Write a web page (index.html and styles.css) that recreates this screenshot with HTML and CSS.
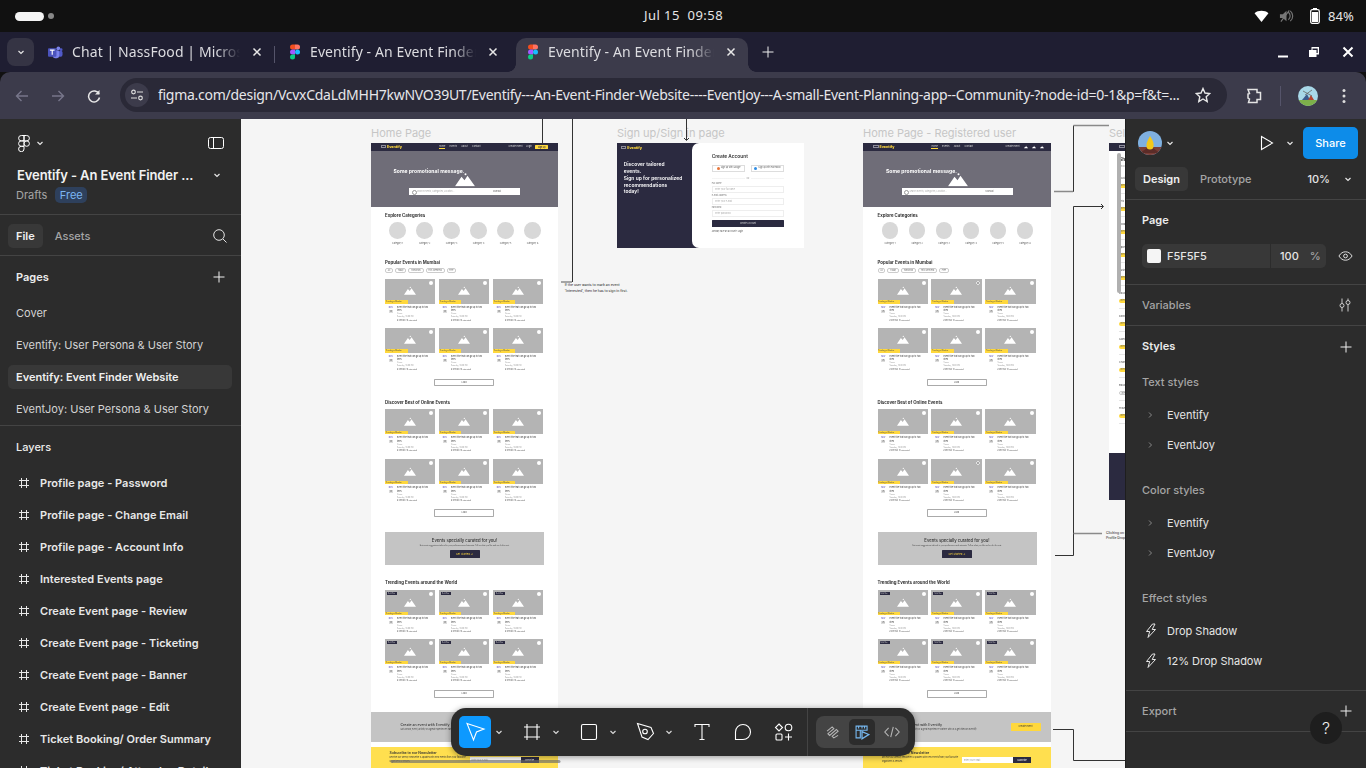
FILE: index.html
```html
<!DOCTYPE html>
<html lang="en">
<head>
<meta charset="utf-8">
<title>Eventify - Figma</title>
<link rel="stylesheet" href="styles.css">
</head>
<body>
<svg class="defs" aria-hidden="true">
  <symbol id="m" viewBox="0 0 20 13"><path d="M0 13 6.5 3.5 9.5 7 12.5 2.5 20 13z" fill="#fff"/><circle cx="10.5" cy="1" r="1" fill="#fff"/></symbol>
  <symbol id="figc" viewBox="0 0 12 18"><path d="M3 0h3v6H3a3 3 0 0 1 0-6z" fill="#f24e1e"/><path d="M6 0h3a3 3 0 0 1 0 6H6z" fill="#ff7262"/><path d="M3 6h3v6H3a3 3 0 0 1 0-6z" fill="#a259ff"/><circle cx="9" cy="9" r="3" fill="#1abcfe"/><path d="M3 12h3v3a3 3 0 1 1-3-3z" fill="#0acf83"/></symbol>
  <symbol id="chev" viewBox="0 0 10 10"><path d="M2.5 4 5 6.5 7.5 4" fill="none" stroke="currentColor" stroke-width="1.2"/></symbol>
  <symbol id="hash" viewBox="0 0 12 12"><path d="M3.5 1v10M8.5 1v10M1 3.5h10M1 8.5h10" fill="none" stroke="currentColor" stroke-width="1"/></symbol>
  <symbol id="plus" viewBox="0 0 12 12"><path d="M6 .5v11M.5 6h11" fill="none" stroke="currentColor" stroke-width="1"/></symbol>
  <symbol id="bolt" viewBox="0 0 12 16"><path d="M7.5 1 1.5 8.5h3.2L3 14.5 10.5 6.5H7.2L10 1z" fill="none" stroke="currentColor" stroke-width="1"/></symbol>
  <symbol id="caret" viewBox="0 0 6 8"><path d="M2 1.5 4.5 4 2 6.5" fill="none" stroke="currentColor" stroke-width="1"/></symbol>
  <symbol id="x" viewBox="0 0 10 10"><path d="M1.5 1.5l7 7M8.5 1.5l-7 7" fill="none" stroke="currentColor" stroke-width="1.5"/></symbol>
</svg>

<header class="status">
  <div class="status-left"><span class="pill"></span><span class="dot"></span></div>
  <div class="clock">Jul 15 &nbsp;09:58</div>
  <div class="status-right">
    <svg class="st-wifi" viewBox="0 0 16 14"><path d="M0.5 3.5C4.5 0 11.5 0 15.500 3.500L8 13z" fill="#fff"/></svg>
    <svg class="st-vol" viewBox="0 0 16 14"><path d="M1 5h3l4-3.500v11L4 9H1z" fill="#777"/><path d="M10 3c2.500 2 2.500 6 0 8M12 1.500c3.500 3 3.500 8 0 11M2 13 11 1" fill="none" stroke="#777" stroke-width="1.200"/></svg>
    <svg class="st-bat" viewBox="0 0 10 16"><rect x="3" y="0" width="4" height="2" fill="#fff"/><rect x=".7" y="1.700" width="8.600" height="13.600" rx="1.500" fill="none" stroke="#fff" stroke-width="1.300"/><rect x="2" y="4" width="6" height="10" fill="#fff"/></svg>
    <span class="pct">84%</span>
  </div>
</header>

<nav class="tabstrip">
  <button class="tablist"><svg class="i10"><use href="#chev"/></svg></button>
  <div class="tab first">
    <svg class="ficon teams" viewBox="0 0 16 16"><circle cx="11" cy="3.500" r="2" fill="#7b83eb"/><circle cx="14" cy="5" r="1.500" fill="#5059c9"/><rect x="8" y="6" width="7.500" height="6.500" rx="2" fill="#5059c9"/><rect x="5" y="5.500" width="7" height="8.500" rx="2.500" fill="#7b83eb"/><rect x="0" y="3.500" width="9" height="9" rx="1" fill="#4b53bc"/><path d="M2 5.500h5M4.500 5.500v5" stroke="#fff" stroke-width="1.200"/></svg>
    <span class="tab-title">Chat | NassFood | Microsoft Teams</span>
    <svg class="tab-x"><use href="#x"/></svg>
  </div>
  <span class="tab-sep"></span>
  <div class="tab second">
    <svg class="ficon"><use href="#figc"/></svg>
    <span class="tab-title">Eventify - An Event Finder Website</span>
    <svg class="tab-x"><use href="#x"/></svg>
  </div>
  <div class="tab active">
    <svg class="ficon"><use href="#figc"/></svg>
    <span class="tab-title">Eventify - An Event Finder Website</span>
    <svg class="tab-x"><use href="#x"/></svg>
  </div>
  <svg class="newtab"><use href="#plus"/></svg>
  <div class="winctl">
    <svg class="w-min" viewBox="0 0 12 12"><path d="M1 10.500h10" stroke="#fff" stroke-width="2"/></svg>
    <svg class="w-max" viewBox="0 0 12 12"><path d="M3.500 1h7.500v7.500H8.500V11H1V4h2.500zM4.500 2.500v1.500h4v3h1.200V2.500z" fill="#fff" fill-rule="evenodd"/></svg>
    <svg class="w-close" viewBox="0 0 12 12"><path d="M1.500 1.500l9 9M10.500 1.500l-9 9" stroke="#fff" stroke-width="2"/></svg>
  </div>
</nav>

<div class="toolbar">
  <svg class="nav-ic dim" viewBox="0 0 14 14"><path d="M13 7H1.500M6.500 2 1.500 7l5 5" fill="none" stroke="currentColor" stroke-width="1.400"/></svg>
  <svg class="nav-ic dim fwd" viewBox="0 0 14 14"><path d="M1 7h11.500M7.500 2l5 5-5 5" fill="none" stroke="currentColor" stroke-width="1.400"/></svg>
  <svg class="nav-ic reload" viewBox="0 0 14 14"><path d="M12 5A5.500 5.500 0 1 0 12.500 8.500" fill="none" stroke="currentColor" stroke-width="1.500"/><path d="M12.500 1v4.500H8z" fill="currentColor"/></svg>
  <div class="omni">
    <span class="site"><svg viewBox="0 0 14 14"><circle cx="3.500" cy="4" r="1.800" fill="none" stroke="#ddd" stroke-width="1.200"/><path d="M7 4h6M1 10h6" stroke="#ddd" stroke-width="1.200"/><circle cx="10.500" cy="10" r="1.800" fill="none" stroke="#ddd" stroke-width="1.200"/></svg></span>
    <span class="url">figma.com/design/VcvxCdaLdMHH7kwNVO39UT/Eventify---An-Event-Finder-Website----EventJoy---A-small-Event-Planning-app--Community-?node-id=0-1&amp;p=f&amp;t=...</span>
    <svg class="star" viewBox="0 0 16 16"><path d="M8 1.500 10 6l4.800.5-3.600 3.200 1 4.800L8 12l-4.200 2.500 1-4.800L1.200 6.500 6 6z" fill="none" stroke="#e8e8e8" stroke-width="1.400"/></svg>
  </div>
  <svg class="ext" viewBox="0 0 18 18"><path d="M3 2.500h9v3h3.500v7H12v3H3.500l1-3.500-1.500-1V7l1.500-.5z" fill="none" stroke="#e4e4e4" stroke-width="1.500"/></svg>
  <span class="tb-sep"></span>
  <svg class="chrome-av" viewBox="0 0 20 20"><defs><clipPath id="cav"><circle cx="10" cy="10" r="10"/></clipPath></defs><g clip-path="url(#cav)"><rect width="20" height="20" fill="#a8d8e8"/><rect y="14" width="20" height="6" fill="#7db04a"/><path d="M4 14 9 8l3 6z" fill="#3c5a8c"/><path d="M10 14l3-5 3 5z" fill="#b5452f"/><path d="M5 5l9 5M14 4 7 9" stroke="#666" stroke-width=".8"/></g></svg>
  <svg class="kebab" viewBox="0 0 4 16"><circle cx="2" cy="2.500" r="1.500" fill="#ddd"/><circle cx="2" cy="8" r="1.500" fill="#ddd"/><circle cx="2" cy="13.500" r="1.500" fill="#ddd"/></svg>
</div>

<main class="app">
  <aside class="left">
    <section class="l-head">
      <div class="l-top">
        <svg class="figlogo" viewBox="0 0 12 17"><path d="M6 .5H3.300a2.700 2.700 0 0 0 0 5.400H6zM6 .5h2.700a2.700 2.700 0 0 1 0 5.400H6zM6 5.900H3.300a2.700 2.700 0 0 0 0 5.400H6zM11.400 8.600a2.700 2.700 0 1 1-5.400 0 2.700 2.700 0 0 1 5.400 0zM6 11.300H3.300A2.700 2.700 0 1 0 6 14z" fill="none" stroke="#fff" stroke-width="1"/></svg>
        <svg class="i10 lc"><use href="#chev"/></svg>
        <svg class="panel-ic" viewBox="0 0 16 12"><rect x=".5" y=".5" width="15" height="11" rx="2" fill="none" stroke="#fff"/><path d="M5.500 .5v11" stroke="#fff"/></svg>
      </div>
      <div class="l-title"><span>Eventify - An Event Finder ...</span><svg class="i10"><use href="#chev"/></svg></div>
      <div class="l-sub"><span>Drafts</span><span class="free">Free</span></div>
    </section>
    <section class="l-tabs">
      <span class="ltab on">File</span><span class="ltab">Assets</span>
      <svg class="search" viewBox="0 0 14 14"><circle cx="6" cy="6" r="5.300" fill="none" stroke="#e6e6e6"/><path d="M10 10l3.500 3.500" stroke="#e6e6e6"/></svg>
    </section>
    <section class="l-pages">
      <div class="sec-h"><span>Pages</span><svg class="i12"><use href="#plus"/></svg></div>
      <div class="page">Cover</div>
      <div class="page">Eventify: User Persona &amp; User Story</div>
      <div class="page sel">Eventify: Event Finder Website</div>
      <div class="page">EventJoy: User Persona &amp; User Story</div>
    </section>
    <section class="l-layers">
      <div class="layers-h">Layers</div>
      <div class="layer"><svg class="hash"><use href="#hash"/></svg>Profile page - Password</div>
      <div class="layer"><svg class="hash"><use href="#hash"/></svg>Profile page - Change Email</div>
      <div class="layer"><svg class="hash"><use href="#hash"/></svg>Profile page - Account Info</div>
      <div class="layer"><svg class="hash"><use href="#hash"/></svg>Interested Events page</div>
      <div class="layer"><svg class="hash"><use href="#hash"/></svg>Create Event page - Review</div>
      <div class="layer"><svg class="hash"><use href="#hash"/></svg>Create Event page - Ticketing</div>
      <div class="layer"><svg class="hash"><use href="#hash"/></svg>Create Event page - Banner</div>
      <div class="layer"><svg class="hash"><use href="#hash"/></svg>Create Event page - Edit</div>
      <div class="layer"><svg class="hash"><use href="#hash"/></svg>Ticket Booking/ Order Summary</div>
      <div class="layer"><svg class="hash"><use href="#hash"/></svg>Ticket Booking/ Attendee Details</div>
    </section>
  </aside>

  <div class="canvas">
    <div class="flabel l1">Home Page</div>
    <div class="flabel l2">Sign up/Sign in page</div>
    <div class="flabel l3">Home Page - Registered user</div>
    <div class="flabel l4">Select Interests page</div>

    <!-- Frame: Home page -->
    <article class="frame f1">
      <div class="fnav"><span class="flogo"><i></i>Eventify</span><span class="flinks"><u class="cur">Home</u><u>Events</u><u>About</u><u>Contact</u></span><span class="fright"><u>Create Event</u><u>Login</u><b class="signup">Sign Up</b></span></div>
      <div class="hero"><p class="promo">Some promotional message.</p><svg class="hero-m"><use href="#m"/></svg><div class="hsearch"><span class="sq">Search Events, Categories, Location...</span><span class="sl">Mumbai</span></div></div>
      <div class="fbody">
        <h3 class="h-explore">Explore Categories</h3>
        <div class="cats"><div class="cat"><i></i>Category 1</div><div class="cat"><i></i>Category 2</div><div class="cat"><i></i>Category 3</div><div class="cat"><i></i>Category 4</div><div class="cat"><i></i>Category 5</div><div class="cat"><i></i>Category 6</div></div>
        <h3 class="h-popular">Popular Events in Mumbai</h3>
        <div class="chips"><span>All</span><span>Today</span><span>Tomorrow</span><span>This Weekend</span><span>Free</span></div>
        <div class="grid g1">
          <div class="card"><div class="thumb"><svg class="tm"><use href="#m"/></svg><i class="fav"></i><em class="tag">Trending in Mumbai</em></div><div class="meta"><div class="date"><b>NOV</b><s>25</s></div><div class="info"><p>Event title that can go up to two lines</p><small>Venue</small><small>Saturday, 10:00 PM</small><small class="k">₹ 499 INR &nbsp;10 interested</small></div></div></div>
          <div class="card"><div class="thumb"><svg class="tm"><use href="#m"/></svg><i class="fav"></i><em class="tag">Trending in Mumbai</em></div><div class="meta"><div class="date"><b>NOV</b><s>25</s></div><div class="info"><p>Event title that can go up to two lines</p><small>Venue</small><small>Saturday, 10:00 PM</small><small class="k">₹ 499 INR &nbsp;10 interested</small></div></div></div>
          <div class="card"><div class="thumb"><svg class="tm"><use href="#m"/></svg><i class="fav"></i><em class="tag">Trending in Mumbai</em></div><div class="meta"><div class="date"><b>NOV</b><s>25</s></div><div class="info"><p>Event title that can go up to two lines</p><small>Venue</small><small>Saturday, 10:00 PM</small><small class="k">₹ 499 INR &nbsp;10 interested</small></div></div></div>
          <div class="card"><div class="thumb"><svg class="tm"><use href="#m"/></svg><i class="fav"></i><em class="tag">Trending in Mumbai</em></div><div class="meta"><div class="date"><b>NOV</b><s>25</s></div><div class="info"><p>Event title that can go up to two lines</p><small>Venue</small><small>Saturday, 10:00 PM</small><small class="k">₹ 499 INR &nbsp;10 interested</small></div></div></div>
          <div class="card"><div class="thumb"><svg class="tm"><use href="#m"/></svg><i class="fav"></i><em class="tag">Trending in Mumbai</em></div><div class="meta"><div class="date"><b>NOV</b><s>25</s></div><div class="info"><p>Event title that can go up to two lines</p><small>Venue</small><small>Saturday, 10:00 PM</small><small class="k">₹ 499 INR &nbsp;10 interested</small></div></div></div>
          <div class="card"><div class="thumb"><svg class="tm"><use href="#m"/></svg><i class="fav"></i><em class="tag">Trending in Mumbai</em></div><div class="meta"><div class="date"><b>NOV</b><s>25</s></div><div class="info"><p>Event title that can go up to two lines</p><small>Venue</small><small>Saturday, 10:00 PM</small><small class="k">₹ 499 INR &nbsp;10 interested</small></div></div></div>
        </div>
        <div class="load l-a">Load</div>
        <h3 class="h-online">Discover Best of Online Events</h3>
        <div class="grid g2">
          <div class="card"><div class="thumb"><svg class="tm"><use href="#m"/></svg><i class="fav"></i><em class="tag">Trending in Mumbai</em></div><div class="meta"><div class="date"><b>NOV</b><s>25</s></div><div class="info"><p>Event title that can go up to two lines</p><small>Venue</small><small>Saturday, 10:00 PM</small><small class="k">₹ 499 INR &nbsp;10 interested</small></div></div></div>
          <div class="card"><div class="thumb"><svg class="tm"><use href="#m"/></svg><i class="fav"></i><em class="tag">Trending in Mumbai</em></div><div class="meta"><div class="date"><b>NOV</b><s>25</s></div><div class="info"><p>Event title that can go up to two lines</p><small>Venue</small><small>Saturday, 10:00 PM</small><small class="k">₹ 499 INR &nbsp;10 interested</small></div></div></div>
          <div class="card"><div class="thumb"><svg class="tm"><use href="#m"/></svg><i class="fav"></i><em class="tag">Trending in Mumbai</em></div><div class="meta"><div class="date"><b>NOV</b><s>25</s></div><div class="info"><p>Event title that can go up to two lines</p><small>Venue</small><small>Saturday, 10:00 PM</small><small class="k">₹ 499 INR &nbsp;10 interested</small></div></div></div>
          <div class="card"><div class="thumb"><svg class="tm"><use href="#m"/></svg><i class="fav"></i><em class="tag">Trending in Mumbai</em></div><div class="meta"><div class="date"><b>NOV</b><s>25</s></div><div class="info"><p>Event title that can go up to two lines</p><small>Venue</small><small>Saturday, 10:00 PM</small><small class="k">₹ 499 INR &nbsp;10 interested</small></div></div></div>
          <div class="card"><div class="thumb"><svg class="tm"><use href="#m"/></svg><i class="fav"></i><em class="tag">Trending in Mumbai</em></div><div class="meta"><div class="date"><b>NOV</b><s>25</s></div><div class="info"><p>Event title that can go up to two lines</p><small>Venue</small><small>Saturday, 10:00 PM</small><small class="k">₹ 499 INR &nbsp;10 interested</small></div></div></div>
          <div class="card"><div class="thumb"><svg class="tm"><use href="#m"/></svg><i class="fav"></i><em class="tag">Trending in Mumbai</em></div><div class="meta"><div class="date"><b>NOV</b><s>25</s></div><div class="info"><p>Event title that can go up to two lines</p><small>Venue</small><small>Saturday, 10:00 PM</small><small class="k">₹ 499 INR &nbsp;10 interested</small></div></div></div>
        </div>
        <div class="load l-b">Load</div>
        <div class="curated"><h4>Events specially curated for you!</h4><p>Get event suggestions tailored to your preferences and interests. Tell us what you like and we do the rest.</p><span class="getst">Get Started &#8594;</span></div>
        <h3 class="h-trend">Trending Events around the World</h3>
        <div class="grid g3">
          <div class="card"><div class="thumb"><span class="sold">Sold Out</span><svg class="tm"><use href="#m"/></svg><i class="fav"></i><em class="tag">Trending in Mumbai</em></div><div class="meta"><div class="date"><b>NOV</b><s>25</s></div><div class="info"><p>Event title that can go up to two lines</p><small>Venue</small><small>Saturday, 10:00 PM</small><small class="k">₹ 499 INR &nbsp;10 interested</small></div></div></div>
          <div class="card"><div class="thumb"><span class="sold">Sold Out</span><svg class="tm"><use href="#m"/></svg><i class="fav"></i><em class="tag">Trending in Mumbai</em></div><div class="meta"><div class="date"><b>NOV</b><s>25</s></div><div class="info"><p>Event title that can go up to two lines</p><small>Venue</small><small>Saturday, 10:00 PM</small><small class="k">₹ 499 INR &nbsp;10 interested</small></div></div></div>
          <div class="card"><div class="thumb"><span class="sold">Sold Out</span><svg class="tm"><use href="#m"/></svg><i class="fav"></i><em class="tag">Trending in Mumbai</em></div><div class="meta"><div class="date"><b>NOV</b><s>25</s></div><div class="info"><p>Event title that can go up to two lines</p><small>Venue</small><small>Saturday, 10:00 PM</small><small class="k">₹ 499 INR &nbsp;10 interested</small></div></div></div>
          <div class="card"><div class="thumb"><span class="sold">Sold Out</span><svg class="tm"><use href="#m"/></svg><i class="fav"></i><em class="tag">Trending in Mumbai</em></div><div class="meta"><div class="date"><b>NOV</b><s>25</s></div><div class="info"><p>Event title that can go up to two lines</p><small>Venue</small><small>Saturday, 10:00 PM</small><small class="k">₹ 499 INR &nbsp;10 interested</small></div></div></div>
          <div class="card"><div class="thumb"><span class="sold">Sold Out</span><svg class="tm"><use href="#m"/></svg><i class="fav"></i><em class="tag">Trending in Mumbai</em></div><div class="meta"><div class="date"><b>NOV</b><s>25</s></div><div class="info"><p>Event title that can go up to two lines</p><small>Venue</small><small>Saturday, 10:00 PM</small><small class="k">₹ 499 INR &nbsp;10 interested</small></div></div></div>
          <div class="card"><div class="thumb"><span class="sold">Sold Out</span><svg class="tm"><use href="#m"/></svg><i class="fav"></i><em class="tag">Trending in Mumbai</em></div><div class="meta"><div class="date"><b>NOV</b><s>25</s></div><div class="info"><p>Event title that can go up to two lines</p><small>Venue</small><small>Saturday, 10:00 PM</small><small class="k">₹ 499 INR &nbsp;10 interested</small></div></div></div>
        </div>
        <div class="load l-c">Load</div>
      </div>
      <div class="cta"><div><h4>Create an event with Eventify</h4><p>Got a show, event, activity or a great experience? Partner with us &amp; get listed on Eventify</p></div><span class="ctab">Create Event</span></div>
      <div class="news"><div class="ntext"><h4>Subscribe to our Newsletter</h4><p>Receive our weekly newsletter &amp; updates with new events from your favourite organizers &amp; venues.</p></div><span class="ninput">Enter your e-mail</span><span class="nbtn">Subscribe</span></div>
    </article>

    <!-- Frame: Sign up -->
    <article class="frame f2">
      <div class="su-left"><span class="flogo"><i></i>Eventify</span><p>Discover tailored<br>events.<br>Sign up for personalized<br>recommendations<br>today!</p></div>
      <div class="su-right">
        <h4>Create Account</h4>
        <div class="su-btns"><span class="gbtn"><i class="gg"></i>Sign up with Google</span><span class="gbtn"><i class="fb"></i>Sign up with Facebook</span></div>
        <div class="su-or"><span>OR</span></div>
        <label>Full Name</label><div class="su-in">Enter your full name</div>
        <label>E-mail Address</label><div class="su-in">Enter your e-mail</div>
        <label>Password</label><div class="su-in">Enter password</div>
        <div class="su-go">Create Account</div>
        <div class="su-log">Already have an account? Login</div>
      </div>
    </article>

    <!-- Frame: Home registered -->
    <article class="frame f3">
      <div class="fnav"><span class="flogo"><i></i>Eventify</span><span class="flinks"><u class="cur">Home</u><u>Events</u><u>About</u><u>Contact</u></span><span class="fright reg"><u>Create Event</u><svg class="nv"><use href="#m"/></svg><svg class="nv"><use href="#m"/></svg><svg class="nv"><use href="#m"/></svg></span></div>
      <div class="hero"><p class="promo">Some promotional message.</p><svg class="hero-m"><use href="#m"/></svg><div class="hsearch"><span class="sq">Search Events, Categories, Location...</span><span class="sl">Mumbai</span></div></div>
      <div class="fbody">
        <h3 class="h-explore">Explore Categories</h3>
        <div class="cats"><div class="cat"><i></i>Category 1</div><div class="cat"><i></i>Category 2</div><div class="cat"><i></i>Category 3</div><div class="cat"><i></i>Category 4</div><div class="cat"><i></i>Category 5</div><div class="cat"><i></i>Category 6</div></div>
        <h3 class="h-popular">Popular Events in Mumbai</h3>
        <div class="chips"><span>All</span><span>Today</span><span>Tomorrow</span><span>This Weekend</span><span>Free</span></div>
        <div class="grid g1">
          <div class="card"><div class="thumb"><svg class="tm"><use href="#m"/></svg><i class="fav"></i><em class="tag">Trending in Mumbai</em></div><div class="meta"><div class="date"><b>NOV</b><s>25</s></div><div class="info"><p>Event title that can go up to two lines</p><small>Venue</small><small>Saturday, 10:00 PM</small><small class="k">₹ 499 INR &nbsp;10 interested</small></div></div></div>
          <div class="card"><div class="thumb"><svg class="tm"><use href="#m"/></svg><i class="fav dark"></i><em class="tag">Trending in Mumbai</em></div><div class="meta"><div class="date"><b>NOV</b><s>25</s></div><div class="info"><p>Event title that can go up to two lines</p><small>Venue</small><small>Saturday, 10:00 PM</small><small class="k">₹ 499 INR &nbsp;10 interested</small></div></div></div>
          <div class="card"><div class="thumb"><svg class="tm"><use href="#m"/></svg><i class="fav"></i><em class="tag">Trending in Mumbai</em></div><div class="meta"><div class="date"><b>NOV</b><s>25</s></div><div class="info"><p>Event title that can go up to two lines</p><small>Venue</small><small>Saturday, 10:00 PM</small><small class="k">₹ 499 INR &nbsp;10 interested</small></div></div></div>
          <div class="card"><div class="thumb"><svg class="tm"><use href="#m"/></svg><i class="fav"></i><em class="tag">Trending in Mumbai</em></div><div class="meta"><div class="date"><b>NOV</b><s>25</s></div><div class="info"><p>Event title that can go up to two lines</p><small>Venue</small><small>Saturday, 10:00 PM</small><small class="k">₹ 499 INR &nbsp;10 interested</small></div></div></div>
          <div class="card"><div class="thumb"><svg class="tm"><use href="#m"/></svg><i class="fav"></i><em class="tag">Trending in Mumbai</em></div><div class="meta"><div class="date"><b>NOV</b><s>25</s></div><div class="info"><p>Event title that can go up to two lines</p><small>Venue</small><small>Saturday, 10:00 PM</small><small class="k">₹ 499 INR &nbsp;10 interested</small></div></div></div>
          <div class="card"><div class="thumb"><svg class="tm"><use href="#m"/></svg><i class="fav"></i><em class="tag">Trending in Mumbai</em></div><div class="meta"><div class="date"><b>NOV</b><s>25</s></div><div class="info"><p>Event title that can go up to two lines</p><small>Venue</small><small>Saturday, 10:00 PM</small><small class="k">₹ 499 INR &nbsp;10 interested</small></div></div></div>
        </div>
        <div class="load l-a">Load</div>
        <h3 class="h-online">Discover Best of Online Events</h3>
        <div class="grid g2">
          <div class="card"><div class="thumb"><svg class="tm"><use href="#m"/></svg><i class="fav"></i><em class="tag">Trending in Mumbai</em></div><div class="meta"><div class="date"><b>NOV</b><s>25</s></div><div class="info"><p>Event title that can go up to two lines</p><small>Venue</small><small>Saturday, 10:00 PM</small><small class="k">₹ 499 INR &nbsp;10 interested</small></div></div></div>
          <div class="card"><div class="thumb"><svg class="tm"><use href="#m"/></svg><i class="fav"></i><em class="tag">Trending in Mumbai</em></div><div class="meta"><div class="date"><b>NOV</b><s>25</s></div><div class="info"><p>Event title that can go up to two lines</p><small>Venue</small><small>Saturday, 10:00 PM</small><small class="k">₹ 499 INR &nbsp;10 interested</small></div></div></div>
          <div class="card"><div class="thumb"><svg class="tm"><use href="#m"/></svg><i class="fav"></i><em class="tag">Trending in Mumbai</em></div><div class="meta"><div class="date"><b>NOV</b><s>25</s></div><div class="info"><p>Event title that can go up to two lines</p><small>Venue</small><small>Saturday, 10:00 PM</small><small class="k">₹ 499 INR &nbsp;10 interested</small></div></div></div>
          <div class="card"><div class="thumb"><svg class="tm"><use href="#m"/></svg><i class="fav"></i><em class="tag">Trending in Mumbai</em></div><div class="meta"><div class="date"><b>NOV</b><s>25</s></div><div class="info"><p>Event title that can go up to two lines</p><small>Venue</small><small>Saturday, 10:00 PM</small><small class="k">₹ 499 INR &nbsp;10 interested</small></div></div></div>
          <div class="card"><div class="thumb"><svg class="tm"><use href="#m"/></svg><i class="fav dark"></i><em class="tag">Trending in Mumbai</em></div><div class="meta"><div class="date"><b>NOV</b><s>25</s></div><div class="info"><p>Event title that can go up to two lines</p><small>Venue</small><small>Saturday, 10:00 PM</small><small class="k">₹ 499 INR &nbsp;10 interested</small></div></div></div>
          <div class="card"><div class="thumb"><svg class="tm"><use href="#m"/></svg><i class="fav"></i><em class="tag">Trending in Mumbai</em></div><div class="meta"><div class="date"><b>NOV</b><s>25</s></div><div class="info"><p>Event title that can go up to two lines</p><small>Venue</small><small>Saturday, 10:00 PM</small><small class="k">₹ 499 INR &nbsp;10 interested</small></div></div></div>
        </div>
        <div class="load l-b">Load</div>
        <div class="curated"><h4>Events specially curated for you!</h4><p>Get event suggestions tailored to your preferences and interests. Tell us what you like and we do the rest.</p><span class="getst">Get Started &#8594;</span></div>
        <h3 class="h-trend">Trending Events around the World</h3>
        <div class="grid g3">
          <div class="card"><div class="thumb"><span class="sold">Sold Out</span><svg class="tm"><use href="#m"/></svg><i class="fav"></i><em class="tag">Trending in Mumbai</em></div><div class="meta"><div class="date"><b>NOV</b><s>25</s></div><div class="info"><p>Event title that can go up to two lines</p><small>Venue</small><small>Saturday, 10:00 PM</small><small class="k">₹ 499 INR &nbsp;10 interested</small></div></div></div>
          <div class="card"><div class="thumb"><span class="sold">Sold Out</span><svg class="tm"><use href="#m"/></svg><i class="fav"></i><em class="tag">Trending in Mumbai</em></div><div class="meta"><div class="date"><b>NOV</b><s>25</s></div><div class="info"><p>Event title that can go up to two lines</p><small>Venue</small><small>Saturday, 10:00 PM</small><small class="k">₹ 499 INR &nbsp;10 interested</small></div></div></div>
          <div class="card"><div class="thumb"><span class="sold">Sold Out</span><svg class="tm"><use href="#m"/></svg><i class="fav"></i><em class="tag">Trending in Mumbai</em></div><div class="meta"><div class="date"><b>NOV</b><s>25</s></div><div class="info"><p>Event title that can go up to two lines</p><small>Venue</small><small>Saturday, 10:00 PM</small><small class="k">₹ 499 INR &nbsp;10 interested</small></div></div></div>
          <div class="card"><div class="thumb"><span class="sold">Sold Out</span><svg class="tm"><use href="#m"/></svg><i class="fav"></i><em class="tag">Trending in Mumbai</em></div><div class="meta"><div class="date"><b>NOV</b><s>25</s></div><div class="info"><p>Event title that can go up to two lines</p><small>Venue</small><small>Saturday, 10:00 PM</small><small class="k">₹ 499 INR &nbsp;10 interested</small></div></div></div>
          <div class="card"><div class="thumb"><span class="sold">Sold Out</span><svg class="tm"><use href="#m"/></svg><i class="fav"></i><em class="tag">Trending in Mumbai</em></div><div class="meta"><div class="date"><b>NOV</b><s>25</s></div><div class="info"><p>Event title that can go up to two lines</p><small>Venue</small><small>Saturday, 10:00 PM</small><small class="k">₹ 499 INR &nbsp;10 interested</small></div></div></div>
          <div class="card"><div class="thumb"><span class="sold">Sold Out</span><svg class="tm"><use href="#m"/></svg><i class="fav"></i><em class="tag">Trending in Mumbai</em></div><div class="meta"><div class="date"><b>NOV</b><s>25</s></div><div class="info"><p>Event title that can go up to two lines</p><small>Venue</small><small>Saturday, 10:00 PM</small><small class="k">₹ 499 INR &nbsp;10 interested</small></div></div></div>
        </div>
        <div class="load l-c">Load</div>
      </div>
      <div class="cta"><div><h4>Create an event with Eventify</h4><p>Got a show, event, activity or a great experience? Partner with us &amp; get listed on Eventify</p></div><span class="ctab">Create Event</span></div>
      <div class="news"><div class="ntext"><h4>Subscribe to our Newsletter</h4><p>Receive our weekly newsletter &amp; updates with new events from your favourite organizers &amp; venues.</p></div><span class="ninput">Enter your e-mail</span><span class="nbtn">Subscribe</span></div>
    </article>

    <!-- Frame: select interests -->
    <article class="frame f4">
      <div class="fnav"><span class="flogo"><i></i>Eventify</span></div>
      <div class="int-body">
        <h4>Share your interests with us</h4>
        <p class="int-sub">Choose your interests below to get personalized event suggestions.</p>
        <div class="int"><span>Music</span><em>Interest tag</em></div>
        <div class="int"><span>Arts</span><em>Interest tag</em></div>
        <div class="int"><span>Food</span><em>Interest tag</em></div>
        <div class="int"><span>Sports</span><em>Interest tag</em></div>
        <div class="int"><span>Business</span><em>Interest tag</em></div>
        <div class="int"><span>Education</span><em>Interest tag</em></div>
        <div class="int"><span>Fashion</span><em>Interest tag</em></div>
        <div class="int"><span>Gaming</span><em>Interest tag</em></div>
        <div class="int"><span>Charity</span><em>Interest tag</em></div>
        <div class="int"><span>Education</span><em class="off">Interest tag</em></div>
        <div class="int"><span>Travel</span><em>Interest tag</em></div>
      </div>
      <div class="int-foot"></div>
      <span class="int-scroll"></span>
    </article>

    <svg class="wires" viewBox="241 119 884 649" aria-hidden="true">
      <path class="dk" d="M542.500 119V143M572.500 119V282M686.500 119V140M1054 191.500H1073.500V125.500M1055 555.500H1073.500V206.500H1103M1053 729.500H1073.500V760.500H1125"/>
      <path class="dk" d="M684 138l2.500 2.500 2.500-2.500M1101 204l2.500 2.500-2.500 2.500"/>
      <path class="gr" d="M561 282H572M1073.500 125.500H1109M1073.500 533.500H1102M1054 191.500H1073"/>
      <path class="bar" d="M392 761.500H559"/>
    </svg>

    <p class="note n1">If the user wants to mark an event<br>'Interested', then he has to sign in first.</p>
    <p class="note n2">Clicking on the<br>Profile Dropdown</p>

    <div class="tools">
      <div class="tool-pair"><span class="tool on"><svg viewBox="0 0 32 32"><path d="M8 7.500 25 13l-7.500 3-3 8z" fill="none" stroke="#fff" stroke-width="1.100"/></svg></span><svg class="i10 tc"><use href="#chev"/></svg></div>
      <div class="tool-pair"><span class="tool"><svg viewBox="0 0 32 32"><path d="M11 8v16M21 8v16M8 11h16M8 21h16" fill="none" stroke="#fff" stroke-width="1.100"/></svg></span><svg class="i10 tc"><use href="#chev"/></svg></div>
      <div class="tool-pair"><span class="tool"><svg viewBox="0 0 32 32"><rect x="8.500" y="8.500" width="15" height="15" rx="1.500" fill="none" stroke="#fff" stroke-width="1.100"/></svg></span><svg class="i10 tc"><use href="#chev"/></svg></div>
      <div class="tool-pair"><span class="tool"><svg viewBox="0 0 32 32"><path d="M8.500 7.500 22 11.500l2.500 6-5.500 6-6-2.500z" fill="none" stroke="#fff" stroke-width="1.100"/><circle cx="16" cy="15.500" r="2.300" fill="none" stroke="#fff" stroke-width="1.100"/></svg></span><svg class="i10 tc"><use href="#chev"/></svg></div>
      <span class="tool"><svg viewBox="0 0 32 32"><path d="M9 11V8.500h14V11M16 8.500v15M13.500 23.500h5" fill="none" stroke="#fff" stroke-width="1.100"/></svg></span>
      <span class="tool"><svg viewBox="0 0 32 32"><path d="M8.500 23.500V16a7.500 7.500 0 1 1 7.500 7.500z" fill="none" stroke="#fff" stroke-width="1.100"/></svg></span>
      <span class="tool"><svg viewBox="0 0 32 32"><path d="M11 8l3.500 3.500L11 15l-3.500-3.500z" fill="none" stroke="#fff" stroke-width="1.100"/><circle cx="20.500" cy="11.500" r="3.300" fill="none" stroke="#fff" stroke-width="1.100"/><rect x="8" y="18" width="6" height="6" rx="1" fill="none" stroke="#fff" stroke-width="1.100"/><path d="M20.500 17.500v7M17 21h7" fill="none" stroke="#fff" stroke-width="1.100"/></svg></span>
      <span class="tool-div"></span>
      <div class="modes">
        <span class="mode"><svg viewBox="0 0 26 26"><path d="M6 12 12 7l2 2-7 6 2 2 8-7 2 2-7 6 2 2 5-3" fill="none" stroke="#b5b5b5" stroke-width="1.300"/></svg></span>
        <span class="mode cur"><svg viewBox="0 0 26 26"><path d="M6 6h13v5H11v9H6zM6 11h5M9 6v3M13 6v3M16 6v3" fill="none" stroke="#76b8f0" stroke-width="1.300"/><path d="M13 12.500 21 16l-8 5z" fill="none" stroke="#76b8f0" stroke-width="1.500"/></svg></span>
        <span class="mode"><svg viewBox="0 0 26 26"><path d="M9 8 4.500 13 9 18M17 8l4.500 5-4.500 5M14.500 7l-3 12" fill="none" stroke="#b5b5b5" stroke-width="1.300"/></svg></span>
      </div>
    </div>
  </div>

  <aside class="right">
    <section class="r-top">
      <div class="r-row1">
        <svg class="r-av" viewBox="0 0 24 24"><defs><clipPath id="rav"><circle cx="12" cy="12" r="12"/></clipPath></defs><g clip-path="url(#rav)"><rect width="24" height="24" fill="#7fb0e0"/><rect y="16" width="24" height="8" fill="#7a3d35"/><path d="M2 22 12 15l10 7z" fill="#5b2c28"/><path d="M12 5c3 5 4 7 3.500 10a3.500 3.500 0 0 1-7 0C8 12 10 9 12 5z" fill="#f4c818"/></g></svg>
        <svg class="i10"><use href="#chev"/></svg>
        <svg class="play" viewBox="0 0 14 16"><path d="M1.500 1.500 12.500 8 1.500 14.500z" fill="none" stroke="#fff" stroke-width="1.100"/></svg>
        <svg class="i10 pc"><use href="#chev"/></svg>
        <span class="share">Share</span>
      </div>
      <div class="r-tabs"><span class="rtab on">Design</span><span class="rtab">Prototype</span><span class="zoom">10%</span><svg class="i10"><use href="#chev"/></svg></div>
    </section>
    <section class="r-page">
      <div class="r-h">Page</div>
      <div class="r-fill">
        <div class="fillbox"><i class="swatch"></i><span class="hex">F5F5F5</span><span class="op">100</span><span class="opp">%</span></div>
        <svg class="eye" viewBox="0 0 16 12"><path d="M1 6c3.500-6 10.500-6 14 0-3.500 6-10.500 6-14 0z" fill="none" stroke="#e8e8e8"/><circle cx="8" cy="6" r="2" fill="none" stroke="#e8e8e8"/></svg>
      </div>
    </section>
    <section class="r-vars"><span>Variables</span><svg class="sliders" viewBox="0 0 14 14"><path d="M4 .5v5M4 9.500v4M10 .5v2M10 6.500v7" stroke="#ccc"/><circle cx="4" cy="7.500" r="2" fill="none" stroke="#ccc"/><circle cx="10" cy="4.500" r="2" fill="none" stroke="#ccc"/></svg></section>
    <section class="r-styles">
      <div class="r-h sty"><span>Styles</span><svg class="i12"><use href="#plus"/></svg></div>
      <div class="st-cap first">Text styles</div>
      <div class="st-row"><svg class="car"><use href="#caret"/></svg>Eventify</div>
      <div class="st-row"><svg class="car"><use href="#caret"/></svg>EventJoy</div>
      <div class="st-cap">Color styles</div>
      <div class="st-row"><svg class="car"><use href="#caret"/></svg>Eventify</div>
      <div class="st-row"><svg class="car"><use href="#caret"/></svg>EventJoy</div>
      <div class="st-cap">Effect styles</div>
      <div class="st-row"><svg class="blt"><use href="#bolt"/></svg>Drop Shadow</div>
      <div class="st-row"><svg class="blt"><use href="#bolt"/></svg>12% Drop Shadow</div>
    </section>
    <section class="r-export"><span>Export</span><svg class="i12"><use href="#plus"/></svg></section>
    <span class="help">?</span>
  </aside>
</main>
</body>
</html>
```

FILE: styles.css
```css
* { box-sizing: border-box; }
html, body { margin: 0; height: 768px; overflow: hidden; }
body { width: 1366px; display: flex; flex-direction: column; background: #111; font-family: "Inter", "Liberation Sans", sans-serif; }
p, h3, h4 { margin: 0; }
svg { display: block; flex: none; }
.defs { position: absolute; width: 0; height: 0; }
.i10 { width: 10px; height: 10px; color: #e6e6e6; }
.i12 { width: 12px; height: 12px; color: #f0f0f0; }

/* OS status bar */
.status { height: 32px; background: #111; position: relative; display: flex; align-items: center; justify-content: space-between; padding: 0 12px 0 15px; color: #e6e6e6; font-family: "Noto Sans", sans-serif; flex: none; }
.status-left { display: flex; align-items: center; gap: 4px; }
.pill { width: 29px; height: 9px; border-radius: 5px; background: #f4f4f4; }
.dot { width: 6px; height: 6px; border-radius: 50%; background: #888; }
.clock { position: absolute; left: 644px; top: 6px; font-size: 13px; line-height: 18px; letter-spacing: .45px; }
.status-right { display: flex; align-items: center; }
.st-wifi { width: 15px; height: 13px; margin-right: 10px; }
.st-vol { width: 15px; height: 14px; margin-right: 16px; }
.st-bat { width: 10px; height: 16px; margin-right: 8px; }
.pct { font-size: 13px; letter-spacing: .1px; }

/* browser tabs */
.tabstrip { height: 40px; background: #1f1e32; position: relative; color: #dcdce0; font-family: "Noto Sans", sans-serif; flex: none; }
.tablist { position: absolute; left: 7px; top: 6px; width: 27px; height: 28px; border: 0; border-radius: 8px; background: #353444; display: flex; align-items: center; justify-content: center; padding: 0; }
.tab { position: absolute; top: 6px; height: 34px; display: flex; align-items: center; padding-bottom: 6px; }
.tab.first { left: 48px; width: 216px; }
.tab.second { left: 290px; width: 210px; }
.tab.active { left: 516px; width: 232px; padding-left: 12px; background: #3c3b4b; border-radius: 10px 10px 0 0; }
.tab.active::before, .tab.active::after { content: ""; position: absolute; bottom: 0; width: 8px; height: 8px; }
.tab.active::before { left: -8px; background: radial-gradient(circle at 0 0, transparent 7.500px, #3c3b4b 8px); }
.tab.active::after { right: -8px; background: radial-gradient(circle at 100% 0, transparent 7.500px, #3c3b4b 8px); }
.tab-sep { position: absolute; left: 274px; top: 14px; width: 1px; height: 17px; background: #55546a; }
.ficon { width: 10px; height: 16px; margin-right: 10px; }
.teams { width: 15px; height: 15px; margin-right: 9px; }
.tab-title { width: 166px; overflow: hidden; white-space: nowrap; font-size: 14px; line-height: 18px; letter-spacing: .1px; -webkit-mask-image: linear-gradient(90deg, #000 86%, transparent); mask-image: linear-gradient(90deg, #000 86%, transparent); }
.tab.first .tab-title { width: 168px; }
.tab-x { width: 10px; height: 10px; margin-left: 12px; color: #e8e8e8; }
.newtab { position: absolute; left: 762px; top: 14px; width: 12px; height: 12px; color: #eee; }
.winctl { position: absolute; right: 0; top: 0; }
.w-min, .w-max, .w-close { position: absolute; width: 12px; height: 12px; top: 14px; }
.w-min { right: 77px; }
.w-max { right: 46px; }
.w-close { right: 12px; }

/* browser toolbar */
.toolbar { height: 47px; background: #3c3b4b; border-radius: 10px 10px 0 0; display: flex; align-items: center; padding: 0 18px 0 15px; flex: none; position: relative; }
.nav-ic { width: 14px; height: 14px; color: #e4e4e4; }
.nav-ic.dim { color: #77768a; }
.fwd { margin-left: 22px; }
.reload { margin-left: 22px; margin-right: 19px; color: #e8e8e8; }
.omni { width: 1107px; height: 34px; border-radius: 17px; background: #2a2937; display: flex; align-items: center; padding: 0 16px 0 5px; color: #e6e6ea; margin-top: -1px; }
.site { width: 24px; height: 24px; border-radius: 12px; background: #3c3b4b; display: flex; align-items: center; justify-content: center; }
.site svg { width: 14px; height: 14px; }
.url { margin-left: 9px; font-family: "Noto Sans", sans-serif; font-size: 14px; line-height: 18px; letter-spacing: -.27px; white-space: nowrap; overflow: hidden; width: 1030px; }
.star { width: 16px; height: 16px; margin-left: 8px; }
.ext { width: 18px; height: 18px; margin-left: 18px; }
.tb-sep { width: 1px; height: 20px; background: #55546a; margin-left: 17px; }
.chrome-av { width: 20px; height: 20px; margin-left: 17px; }
.kebab { width: 4px; height: 16px; margin-left: 24px; }

/* app shell */
.app { flex: 1; display: flex; min-height: 0; }
.left { width: 241px; background: #2c2c2c; color: #e6e6e6; font-size: 11px; flex: none; overflow: hidden; }
.l-head { height: 96px; border-bottom: 1px solid #444; padding: 16px 8px 0 17px; }
.l-top { display: flex; align-items: center; height: 16px; }
.figlogo { width: 12px; height: 17px; margin-left: 1px; }
.lc { margin-left: 5px; }
.panel-ic { width: 16px; height: 12px; margin-left: auto; margin-right: 9px; }
.l-title { display: flex; align-items: center; justify-content: space-between; margin-top: 16px; font-size: 13px; line-height: 16px; font-weight: 600; color: #f2f2f2; padding-right: 11px; letter-spacing: -.1px; }
.l-sub { display: flex; align-items: center; margin-top: 4px; color: #a5a5a5; margin-left: -1px; }
.free { margin-left: 8px; width: 32px; height: 16px; line-height: 16px; text-align: center; border-radius: 5px; background: #2e405c; color: #7cb5f2; }
.l-tabs { height: 41px; border-bottom: 1px solid #444; display: flex; align-items: center; padding: 2px 0 0 8px; font-weight: 600; }
.ltab { height: 24px; line-height: 24px; padding: 0 8px; border-radius: 5px; color: #a5a5a5; font-weight: 500; margin-right: 4px; }
.ltab.on { background: #383838; color: #f0f0f0; font-weight: 600; }
.search { width: 14px; height: 14px; margin-left: auto; margin-right: 14px; }
.l-pages { height: 170px; border-bottom: 1px solid #444; padding: 0 9px 0 8px; }
.sec-h { display: flex; justify-content: space-between; align-items: center; height: 42px; padding: 0 7px 0 8px; font-weight: 600; color: #ececec; margin-bottom: 3px; }
.page { height: 24px; line-height: 24px; padding: 0 8px; margin-bottom: 8px; border-radius: 5px; color: #d4d4d4; white-space: nowrap; }
.page.sel { background: #383838; color: #f0f0f0; font-weight: 600; }
.layers-h { height: 41px; line-height: 43px; padding-left: 16px; font-weight: 500; color: #ececec; }
.layer { height: 32px; line-height: 32px; display: flex; align-items: center; padding-left: 18px; font-weight: 600; color: #e8e8e8; white-space: nowrap; letter-spacing: .03px; }
.hash { width: 12px; height: 12px; margin-right: 10px; color: #e8e8e8; }

/* canvas */
.canvas { position: relative; flex: 1; background: #f5f5f5; overflow: hidden; }
.flabel { position: absolute; top: 7px; font-size: 11px; line-height: 14px; color: #c6c6c6; white-space: nowrap; }
.l1 { left: 130px; }
.l2 { left: 376px; }
.l3 { left: 622px; }
.l4 { left: 868px; }
.frame { position: absolute; top: 24px; width: 187.500px; background: #fff; color: #333; font-family: "Inter", sans-serif; filter: blur(.3px); }
.f1 { left: 129.500px; }
.f3 { left: 622px; }
.f2 { left: 375.700px; height: 105.300px; background: #2b2a40; display: flex; }
.f4 { left: 868px; height: 357px; display: flex; flex-direction: column; }

.fnav { height: 7.500px; background: #2b2a40; display: flex; align-items: center; color: #ddd; font-size: 2.300px; padding-left: 10px; flex: none; }
.flogo { color: #ffd83d; font-size: 3.600px; font-weight: 800; display: flex; align-items: center; }
.flogo i { width: 5.500px; height: 3.400px; border: .4px solid #8c8b99; margin-right: 1px; }
.flinks { margin-left: 37px; display: flex; gap: 4.300px; align-items: center; }
.flinks u, .fright u { text-decoration: none; }
.flinks .cur { border-bottom: .8px solid #ffd83d; }
.fright { margin-left: auto; display: flex; gap: 3.500px; align-items: center; padding-right: 10px; }
.signup { background: #ffd83d; color: #2b2a40; padding: 0 2.500px; height: 4.400px; line-height: 4.400px; border-radius: .5px; font-weight: 600; font-size: 2px; }
.reg { padding-right: 7px; gap: 4px; }
.nv { width: 4px; height: 4px; }
.hero { height: 56.200px; background: #6f6d78; position: relative; overflow: hidden; padding: 17.300px 0 0 23px; }
.promo { color: #fff; font-size: 5px; line-height: 6px; font-weight: 700; white-space: nowrap; letter-spacing: .06px; }
.hero-m { position: absolute; left: 84.500px; top: 22.500px; width: 20px; height: 13.500px; }
.hsearch { position: absolute; left: 38.500px; top: 37px; width: 111px; height: 7.400px; background: #fff; display: flex; align-items: center; font-size: 2.100px; padding: 0 3px 0 8px; color: #aaa; }
.hsearch::before { content: ""; position: absolute; left: 2.500px; top: 2.200px; width: 3px; height: 3px; border: .5px solid #999; border-radius: 50%; }
.sq { width: 76px; white-space: nowrap; }
.sl { color: #666; }

.fbody { padding: 0 14px 0 14.500px; }
.fbody h3 { font-size: 4.350px; line-height: 5px; font-weight: 700; color: #333; white-space: nowrap; }
.h-explore { margin-top: 6.500px; }
.cats { display: flex; gap: 10.300px; padding-left: 4.300px; margin-top: 4.300px; }
.cat { width: 16.700px; text-align: center; font-size: 2.200px; line-height: 3px; color: #555; white-space: nowrap; }
.cat i { display: block; width: 16.700px; height: 16.700px; border-radius: 50%; background: #d8d8d8; margin-bottom: 2.500px; }
.h-popular { margin-top: 15.400px; }
.chips { display: flex; gap: 2px; margin-top: 2.700px; font-size: 2px; line-height: 3.400px; color: #666; }
.chips span { border: .4px solid #ccc; border-radius: 2px; padding: 0 1.800px; white-space: nowrap; }
.grid { display: grid; grid-template-columns: repeat(3, 50.200px); gap: 4px 3.800px; }
.g1 { margin-top: 5.600px; }
.g2 { margin-top: 4.500px; row-gap: 5px; }
.g3 { margin-top: 4.800px; }
.card { height: 45px; overflow: hidden; }
.thumb { height: 25px; background: #b4b4b4; position: relative; }
.tm { position: absolute; left: 19px; top: 7.500px; width: 12px; height: 9.500px; }
.fav { position: absolute; right: 2px; top: 2px; width: 4px; height: 4px; border-radius: 50%; background: #fff; }
.fav.dark { box-shadow: inset 0 0 0 1.200px #fff; background: #333; }
.tag { position: absolute; left: 0; bottom: 0; width: 22.500px; height: 3.300px; background: #ffd83d; color: #444; font-style: normal; font-size: 1.700px; line-height: 3.300px; padding-left: .8px; white-space: nowrap; overflow: hidden; }
.sold { position: absolute; left: 2px; top: 1.800px; width: 10px; height: 3px; background: #2b2a40; color: #ddd; font-size: 1.700px; line-height: 3px; padding-left: 1px; white-space: nowrap; overflow: hidden; }
.meta { display: flex; padding: 2.300px 0 0 3px; }
.date { width: 9px; }
.date b { display: block; width: 5.500px; text-align: center; font-size: 1.800px; line-height: 3px; font-weight: 600; color: #6a5fc0; }
.date s { display: block; width: 4px; height: 3px; margin: .8px 0 0 .8px; background: #ddd; text-decoration: none; font-size: 1.800px; line-height: 3px; text-align: center; color: #444; }
.info { width: 36px; font-size: 2.100px; color: #555; }
.info p { line-height: 3.100px; color: #333; }
.info small { display: block; font-size: 1.800px; line-height: 3.200px; color: #999; white-space: nowrap; }
.info .k { color: #555; }
.load { width: 60px; height: 7.400px; margin-left: 49px; border: .6px solid #aaa; border-radius: .8px; background: #fff; text-align: center; font-size: 2.200px; line-height: 6.200px; color: #555; }
.l-a { margin-top: 6px; }
.l-b { margin-top: 5px; }
.l-c { margin-top: 6.300px; }
.h-online { margin-top: 13.500px; }
.curated { margin-top: 15.600px; height: 32.700px; background: #c4c4c4; display: flex; flex-direction: column; align-items: center; padding-top: 5.500px; }
.curated h4 { font-size: 4.200px; line-height: 5px; font-weight: 500; color: #333; white-space: nowrap; }
.curated p { font-size: 1.800px; line-height: 3px; margin-top: 1px; color: #444; white-space: nowrap; }
.getst { margin-top: 3.200px; width: 30px; height: 8px; background: #2b2a40; color: #ffd83d; font-size: 2.600px; line-height: 8px; text-align: center; border-radius: .5px; }
.h-trend { margin-top: 15.500px; }
.cta { margin-top: 14.300px; height: 30px; background: #c4c4c4; display: flex; justify-content: space-between; align-items: center; padding: 0 10px 0 30px; }
.cta h4 { font-size: 3.500px; line-height: 5px; font-weight: 500; color: #333; white-space: nowrap; }
.cta p { font-size: 2px; line-height: 3px; color: #444; white-space: nowrap; }
.ctab { width: 30px; height: 8px; background: #ffd83d; color: #333; font-size: 2.300px; line-height: 8px; text-align: center; border-radius: .5px; flex: none; }
.news { margin-top: 5px; height: 40px; background: #ffdf4f; display: flex; align-items: flex-start; padding: 4px 11px 0 19px; position: relative; }
.ntext { width: 80px; color: #333; }
.ntext h4 { font-size: 3.500px; line-height: 4px; font-weight: 600; white-space: nowrap; }
.ntext p { font-size: 2.100px; line-height: 3.500px; margin-top: 1px; }
.ninput { margin-top: 6px; width: 51px; height: 6px; background: #fff; font-size: 2px; line-height: 6px; padding-left: 2px; color: #999; }
.nbtn { margin-top: 6px; width: 18px; height: 6px; background: #2b2a40; color: #fff; font-size: 2px; line-height: 6px; text-align: center; }

/* sign up */
.su-left { width: 75.500px; flex: none; padding: 2.800px 0 0 4px; color: #fff; }
.su-left p { margin: 11px 0 0 3px; font-size: 4.900px; line-height: 6.900px; font-weight: 600; white-space: nowrap; letter-spacing: .05px; }
.su-right { flex: 1; background: #fff; border-radius: 7px 0 0 7px; padding: 9.500px 20px 0 19.500px; color: #333; }
.su-right h4 { font-size: 4.800px; line-height: 7px; font-weight: 600; white-space: nowrap; }
.su-btns { display: flex; gap: 5.300px; margin-top: 5px; }
.gbtn { flex: 1; height: 7px; border: .4px solid #ddd; font-size: 2.100px; line-height: 6.200px; display: flex; align-items: center; justify-content: center; gap: 1.200px; color: #555; white-space: nowrap; }
.gg, .fb { width: 3px; height: 3px; border-radius: 50%; background: #e8763a; }
.fb { background: #2f8de4; }
.su-or { height: 6px; margin-top: 3.500px; font-size: 2px; line-height: 6px; text-align: center; color: #999; background: linear-gradient(#e4e4e4, #e4e4e4) center / 100% .4px no-repeat; }
.su-or span { background: #fff; padding: 0 2px; }
.su-right label { display: block; font-size: 2.100px; line-height: 2.800px; margin-top: 1.800px; color: #777; }
.su-in { height: 7.400px; border: .4px solid #eee; font-size: 2.100px; line-height: 6.600px; padding-left: 2.500px; color: #aaa; }
.su-go { height: 7.300px; margin-top: 3.200px; background: #2b2a40; color: #ddd; text-align: center; font-size: 2.200px; line-height: 7.300px; border-radius: .5px; }
.su-log { margin-top: 2.500px; font-size: 2.100px; line-height: 3px; color: #555; }

/* interests */
.int-body { flex: 1; padding: 5.500px 0 0 10px; overflow: hidden; }
.int-body h4 { font-size: 4.800px; line-height: 6px; font-weight: 700; white-space: nowrap; }
.int-sub { font-size: 2.400px; line-height: 3px; color: #999; margin-top: 3px; margin-bottom: 3px; white-space: nowrap; }
.int { height: 23px; border-bottom: .4px solid #e6e6e6; padding-top: 6.200px; width: 170px; }
.int span { display: block; font-size: 2.600px; line-height: 3.600px; color: #444; }
.int em { display: block; margin-top: 3px; width: 20px; height: 3.800px; border-radius: 2px; background: #ffd83d; font-style: normal; font-size: 2px; line-height: 3.800px; padding-left: 1.500px; color: #666; }
.int em.off { background: #fff; border: .3px solid #ccc; }
.int-foot { height: 47px; background: #2b2a40; flex: none; }
.int-scroll { position: absolute; left: 8px; top: 10px; width: 4px; height: 140px; border-radius: 2px; background: #b0b0b0; }

/* connectors */
.wires { position: absolute; left: 0; top: 0; width: 884px; height: 649px; fill: none; }
.dk { stroke: #333; stroke-width: 1; }
.gr { stroke: #8a8a8a; stroke-width: 1.300; }
.bar { stroke: rgba(110,110,110,.65); stroke-width: 3; stroke-linecap: round; }
.note { position: absolute; font-size: 3.400px; line-height: 5.300px; color: #444; font-weight: 500; white-space: nowrap; }
.n1 { left: 323.700px; top: 164.300px; }
.n2 { left: 865px; top: 411.500px; }

/* floating tools */
.tools { position: absolute; left: 210px; top: 589px; width: 464px; height: 48px; border-radius: 15px; background: #2c2c2c; box-shadow: 0 1px 6px rgba(0,0,0,.4); display: flex; align-items: center; padding: 0 7px 0 8px; gap: 8.800px; }
.tool { width: 32px; height: 32px; border-radius: 5px; flex: none; }
.tool svg { width: 32px; height: 32px; }
.tool.on { background: #0d99ff; }
.tool-pair { display: flex; align-items: center; width: 48px; flex: none; }
.tc { margin-left: 3px; color: #d8d8d8; }
.tool-div { width: 1px; height: 48px; background: #444; margin-left: -1.600px; flex: none; }
.modes { width: 92px; height: 32px; background: #444; border-radius: 8px; display: flex; align-items: center; margin-left: -.6px; flex: none; }
.mode { width: 33px; height: 26px; display: flex; align-items: center; justify-content: center; border-radius: 5px; flex: none; }
.mode svg { width: 22px; height: 22px; }
.mode.cur { width: 26px; background: #2c2c2c; }

/* right panel */
.right { width: 241px; background: #2c2c2c; border-left: 1px solid #1e1e1e; color: #e6e6e6; font-size: 11px; position: relative; flex: none; overflow: hidden; }
.r-top { height: 81px; border-bottom: 1px solid #444; padding: 8px 8px 0 12px; }
.r-row1 { display: flex; align-items: center; height: 32px; }
.r-av { width: 24px; height: 24px; }
.r-row1 .i10 { margin-left: 3px; }
.play { width: 14px; height: 16px; margin-left: 85px; }
.r-row1 .pc { margin-left: 11px; }
.share { margin-left: auto; width: 55px; height: 32px; line-height: 32px; text-align: center; border-radius: 5px; background: #0d8ce9; color: #fff; font-weight: 500; }
.r-tabs { display: flex; align-items: center; margin: 8px 0 0 -3px; height: 24px; font-weight: 500; }
.rtab { height: 24px; line-height: 24px; padding: 0 8px; border-radius: 5px; color: #a5a5a5; margin-right: 4px; }
.rtab.on { background: #383838; color: #f0f0f0; font-weight: 600; }
.zoom { margin-left: auto; margin-right: 13px; font-weight: 500; }
.r-tabs .i10 { margin-right: 5px; }
.r-page { height: 85px; border-bottom: 1px solid #444; padding: 0 0 0 16px; }
.r-h { height: 41px; line-height: 41px; font-weight: 600; color: #ececec; }
.r-fill { display: flex; align-items: center; margin-top: 3px; }
.fillbox { width: 184px; height: 24px; border-radius: 5px; background: #383838; display: flex; align-items: center; position: relative; padding-left: 5px; font-weight: 500; }
.swatch { width: 14px; height: 14px; border-radius: 2px; background: #f5f5f5; margin-right: 6px; }
.hex { width: 104px; border-right: 1px solid #2c2c2c; height: 24px; line-height: 24px; }
.op { margin-left: 9px; }
.opp { margin-left: 11px; color: #a5a5a5; }
.eye { width: 15px; height: 12px; margin-left: 12px; }
.r-vars { height: 41px; border-bottom: 1px solid #444; display: flex; align-items: center; justify-content: space-between; padding: 0 14px 0 16px; color: #a5a5a5; font-weight: 500; }
.sliders { width: 14px; height: 14px; }
.r-styles { height: 365px; border-bottom: 1px solid #444; padding: 0 14px 0 16px; }
.sty { display: flex; align-items: center; justify-content: space-between; }
.st-cap { color: #a5a5a5; font-weight: 500; height: 16px; line-height: 16px; margin-top: 22px; margin-bottom: 10px; }
.st-cap.first { margin-top: 7px; }
.st-row { height: 30px; display: flex; align-items: center; color: #e6e6e6; font-weight: 400; }
.car { width: 6px; height: 8px; margin: 0 14px 0 5px; color: #888; }
.blt { width: 12px; height: 16px; margin: 0 10px 0 3px; color: #e6e6e6; }
.r-export { height: 41px; border-bottom: 1px solid #444; display: flex; align-items: center; justify-content: space-between; padding: 0 14px 0 16px; color: #a5a5a5; font-weight: 500; }
.help { position: absolute; left: 184px; top: 593px; width: 32px; height: 32px; border-radius: 50%; background: #1e1e1e; color: #eee; text-align: center; font-size: 16px; line-height: 32px; font-weight: 300; }
```
